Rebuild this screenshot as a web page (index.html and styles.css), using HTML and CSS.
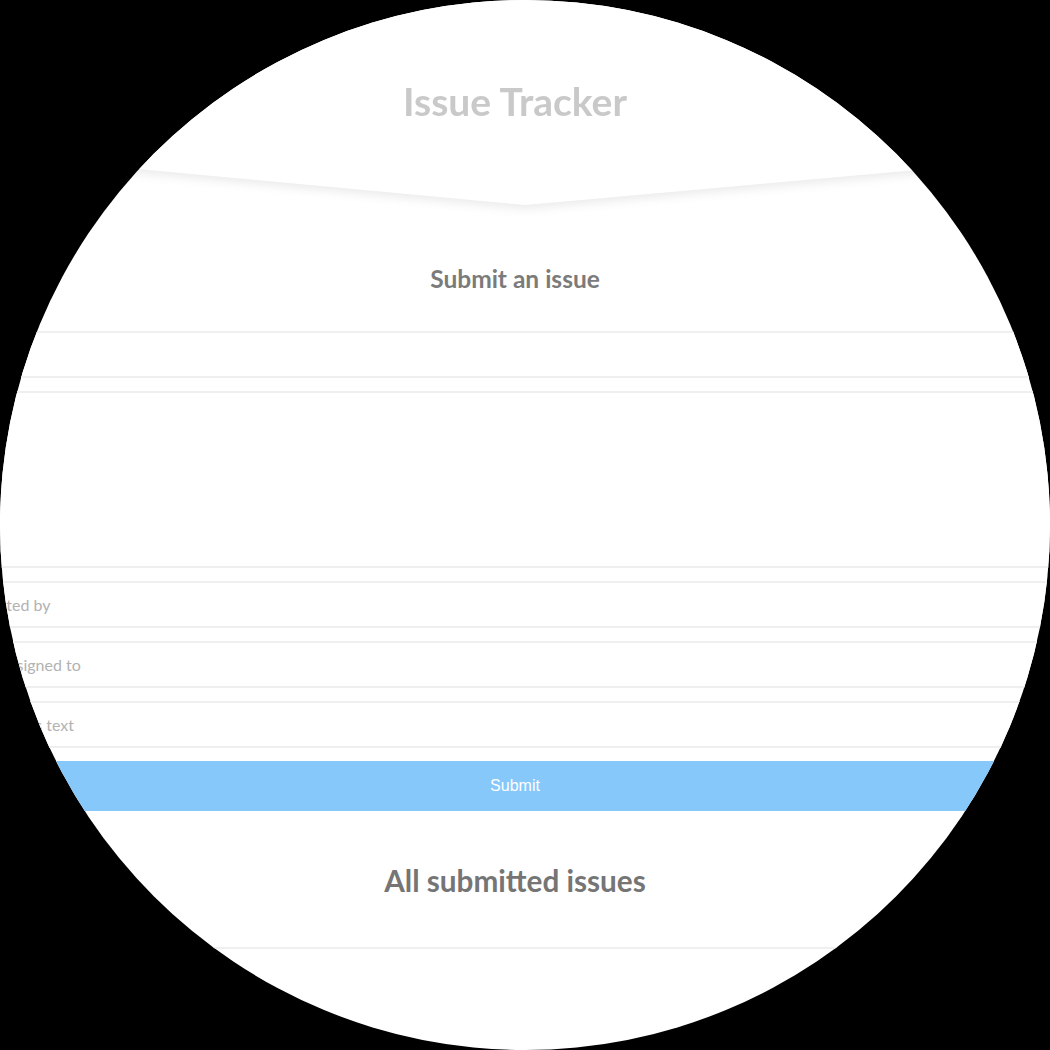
FILE: index.html
```html
<!DOCTYPE html>
<html lang="en">
<head>
<meta charset="utf-8">
<title>Issue Tracker</title>
<link rel="stylesheet" href="styles.css">
</head>
<body>
<div class="lens">
  <div class="header-wrap">
    <header class="header">
      <h1 class="title">Issue Tracker</h1>
    </header>
  </div>
  <section class="submit">
    <h2 class="section-title">Submit an issue</h2>
    <form class="form">
      <input class="field" type="text" placeholder="*Title">
      <textarea class="field field-area" placeholder="*Text"></textarea>
      <input class="field" type="text" placeholder="*Created by">
      <input class="field" type="text" placeholder="(opt)Assigned to">
      <input class="field" type="text" placeholder="(opt)Status text">
      <button class="btn" type="button">Submit</button>
    </form>
  </section>
  <section class="issues">
    <h2 class="issues-title">All submitted issues</h2>
    <div class="issue-list"></div>
  </section>
</div>
</body>
</html>
```

FILE: styles.css
```css
html, body {
  margin: 0;
  padding: 0;
  background: #000;
}

body {
  font-family: Lato, "Open Sans", sans-serif;
}

.lens {
  width: 1050px;
  height: 1050px;
  border-radius: 50%;
  overflow: hidden;
  background: #fff;
}

.header-wrap {
  filter: drop-shadow(0 4px 5px rgba(0, 0, 0, 0.08));
}

.header {
  height: 208px;
  background: #fff;
  clip-path: polygon(0 0, 100% 0, 100% 158px, 50% 205px, 0 156px);
  display: flex;
  justify-content: center;
  padding: 77px 20px 0 0;
  box-sizing: border-box;
}

.title {
  margin: 0;
  font-size: 39px;
  line-height: 48px;
  font-weight: 700;
  color: #c9c9c9;
}

.submit {
  display: flex;
  flex-direction: column;
}

.section-title {
  margin: 56px 0 0;
  padding-right: 20px;
  text-align: center;
  font-size: 24.5px;
  line-height: 30px;
  font-weight: 700;
  color: #7b7b7b;
}

.form {
  margin: 37px 0 0 -33px;
  display: flex;
  flex-direction: column;
  gap: 13px;
}

.field {
  display: block;
  width: 100%;
  height: 47px;
  box-sizing: border-box;
  margin: 0;
  padding: 0;
  border: 0;
  border-top: 2px solid #efefef;
  border-bottom: 2px solid #efefef;
  background: #fff;
  font-family: Lato, "Open Sans", sans-serif;
  font-size: 16px;
  color: #555;
  outline: none;
}

.field::placeholder {
  color: #b2b2b2;
}

.field-area {
  height: 177px;
  resize: none;
  padding-top: 14px;
}

.btn {
  display: block;
  width: 100%;
  height: 50px;
  margin: 0;
  padding: 0 0 0 13px;
  border: 0;
  background: #87c8fb;
  color: #fff;
  font-family: "Liberation Sans", Arial, sans-serif;
  font-size: 16px;
}

.issues {
  display: flex;
  flex-direction: column;
}

.issues-title {
  margin: 52px 0 0;
  padding-right: 20px;
  text-align: center;
  font-size: 29.7px;
  line-height: 36px;
  font-weight: 700;
  color: #757575;
}

.issue-list {
  margin-top: 48px;
  height: 100px;
  border-top: 2px solid #efefef;
}
```
